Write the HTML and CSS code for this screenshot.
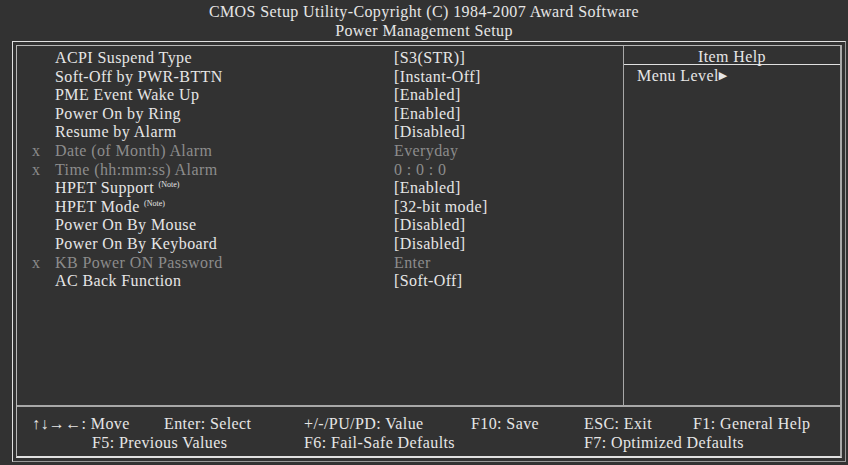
FILE: index.html
```html
<!DOCTYPE html>
<html lang="en">
<head>
    <meta charset="UTF-8">
    <title>Power Management Setup</title>
    <link rel="stylesheet" href="styles.css">
</head>
<body>
    <div class="title">
        <div>CMOS Setup Utility-Copyright (C) 1984-2007 Award Software</div>
        <div>Power Management Setup</div>
    </div>

    <div class="frame">
        <div class="inner">
            <div class="main">
                <div class="items">
                    <div class="row"><span class="mark"></span><span class="label">ACPI Suspend Type</span><span class="value">[S3(STR)]</span></div>
                    <div class="row"><span class="mark"></span><span class="label">Soft-Off by PWR-BTTN</span><span class="value">[Instant-Off]</span></div>
                    <div class="row"><span class="mark"></span><span class="label">PME Event Wake Up</span><span class="value">[Enabled]</span></div>
                    <div class="row"><span class="mark"></span><span class="label">Power On by Ring</span><span class="value">[Enabled]</span></div>
                    <div class="row"><span class="mark"></span><span class="label">Resume by Alarm</span><span class="value">[Disabled]</span></div>
                    <div class="row dim"><span class="mark">x</span><span class="label">Date (of Month) Alarm</span><span class="value">Everyday</span></div>
                    <div class="row dim"><span class="mark">x</span><span class="label">Time (hh:mm:ss) Alarm</span><span class="value">0 : 0 : 0</span></div>
                    <div class="row"><span class="mark"></span><span class="label">HPET Support <sup>(Note)</sup></span><span class="value">[Enabled]</span></div>
                    <div class="row"><span class="mark"></span><span class="label">HPET Mode <sup>(Note)</sup></span><span class="value">[32-bit mode]</span></div>
                    <div class="row"><span class="mark"></span><span class="label">Power On By Mouse</span><span class="value">[Disabled]</span></div>
                    <div class="row"><span class="mark"></span><span class="label">Power On By Keyboard</span><span class="value">[Disabled]</span></div>
                    <div class="row dim"><span class="mark">x</span><span class="label">KB Power ON Password</span><span class="value">Enter</span></div>
                    <div class="row"><span class="mark"></span><span class="label">AC Back Function</span><span class="value">[Soft-Off]</span></div>
                </div>
                <div class="help">
                    <div class="help-title">Item Help</div>
                    <div class="help-text">Menu Level<span class="arrow">&#9654;</span></div>
                </div>
            </div>
            <div class="keys">
                <div class="keyrow">
                    <span>&uarr;&darr;&rarr;&larr;: Move</span>
                    <span>Enter: Select</span>
                    <span>+/-/PU/PD: Value</span>
                    <span>F10: Save</span>
                    <span>ESC: Exit</span>
                    <span>F1: General Help</span>
                </div>
                <div class="keyrow">
                    <span class="k1b">F5: Previous Values</span>
                    <span>F6: Fail-Safe Defaults</span>
                    <span>F7: Optimized Defaults</span>
                </div>
            </div>
        </div>
    </div>
</body>
</html>
```

FILE: styles.css
```css
body {
    margin: 0;
    background-color: #323232;
    color: #e6e6e6;
    font-family: "Liberation Serif", "Times New Roman", serif;
    font-size: 16px;
    letter-spacing: 0.4px;
    width: 848px;
    height: 465px;
    overflow: hidden;
}
.title {
    text-align: center;
    line-height: 19px;
    padding-top: 2px;
    height: 39px;
}
.frame {
    margin-left: 12px;
    width: 826px;
    height: 414px;
    border: 1px solid #e0e0e0;
    border-right-color: #9a9a9a;
    border-bottom-color: #9a9a9a;
    padding: 3px 3px 2px 3px;
}
.inner {
    height: 410px;
    border: 1px solid #b8b8b8;
    border-right: 2px solid #a8a8a8;
    border-bottom: 2px solid #e0e0e0;
    display: flex;
    flex-direction: column;
}
.main {
    display: flex;
    height: 359px;
    border-bottom: 2px solid #a8a8a8;
}
.items {
    width: 606px;
    border-right: 1px solid #a8a8a8;
    padding-top: 3px;
}
.row {
    display: flex;
    height: 18.6px;
    line-height: 18px;
}
.mark {
    width: 38px;
    padding-left: 15px;
    box-sizing: border-box;
}
.label {
    width: 339px;
}
.value {
    flex: 1;
}
.dim {
    color: #8c8c8c;
}
sup {
    font-size: 8px;
    letter-spacing: 0;
    vertical-align: 6px;
    line-height: 0;
}
.help {
    flex: 1;
}
.help-title {
    text-align: center;
    height: 18px;
    line-height: 22px;
    border-bottom: 1px solid #e0e0e0;
}
.help-text {
    padding-left: 13px;
    padding-top: 1px;
    line-height: 20px;
}
.arrow {
    font-family: "DejaVu Sans", sans-serif;
    font-size: 11px;
    letter-spacing: 0;
    vertical-align: 2px;
}
.keys {
    flex: 1;
    padding-top: 7px;
}
.keyrow {
    height: 19px;
    line-height: 19px;
    display: grid;
    grid-template-columns: 132px 140px 167px 113px 109px 1fr;
    padding-left: 15px;
}
.keyrow:last-child {
    grid-template-columns: 60px 212px 280px 1fr;
}
.k1b {
    grid-column: 2;
}
```
